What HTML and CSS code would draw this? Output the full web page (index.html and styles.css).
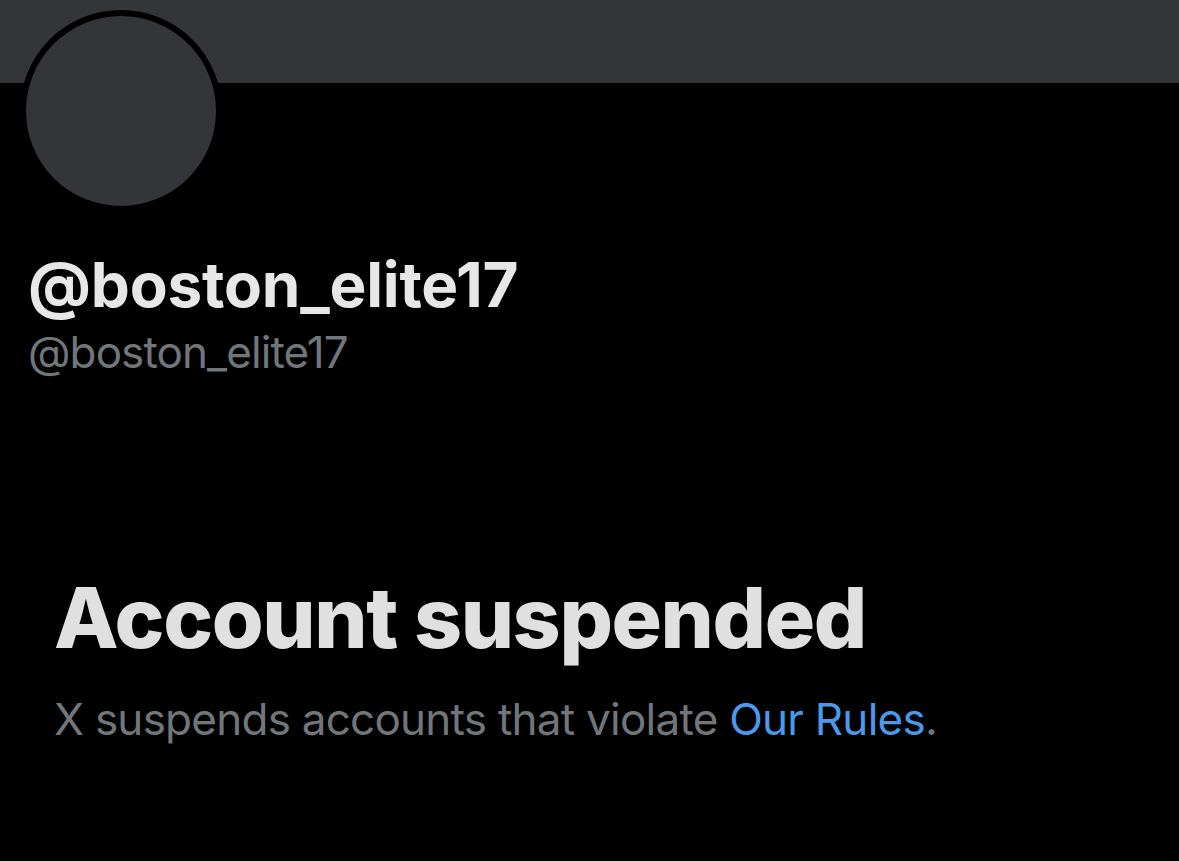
FILE: index.html
```html
<!DOCTYPE html>
<html>
<head>
<meta charset="utf-8">
<link rel="stylesheet" href="styles.css">
</head>
<body>
<div class="banner"></div>
<div class="avatar"></div>
<div class="names">
  <div class="display">@boston_elite17</div>
  <div class="handle">@boston_elite17</div>
</div>
<div class="notice">
  <h1 class="title">Account suspended</h1>
  <p class="desc">X suspends accounts that violate <a class="link">Our Rules</a>.</p>
</div>
</body>
</html>
```
FILE: styles.css
```css
html, body {
  margin: 0;
  padding: 0;
  background: #000;
  height: 100%;
  overflow: hidden;
}
body {
  font-family: Inter, "Noto Sans", sans-serif;
}
.banner {
  height: 83px;
  background: #333538;
}
.avatar {
  width: 190px;
  height: 190px;
  border: 6px solid #000;
  border-radius: 50%;
  background: #333538;
  margin: -73px 0 0 20px;
}
.names {
  padding-left: 28px;
  margin-top: 36px;
}
.display {
  color: #e7e7e7;
  font-weight: 700;
  font-size: 62px;
  line-height: 74px;
  letter-spacing: -0.2px;
}
.handle {
  color: #71767b;
  font-size: 44px;
  line-height: 56px;
  letter-spacing: -0.9px;
  margin-top: 2px;
}
.notice {
  padding-left: 54px;
  margin-top: 188px;
}
.title {
  margin: 0;
  color: #e0e0e0;
  font-weight: 800;
  font-size: 84px;
  line-height: 100px;
  letter-spacing: -1.4px;
}
.desc {
  margin: 23px 0 0;
  color: #71767b;
  font-size: 44px;
  line-height: 56px;
  letter-spacing: -0.75px;
}
.link {
  color: #4a9ae9;
}
```
